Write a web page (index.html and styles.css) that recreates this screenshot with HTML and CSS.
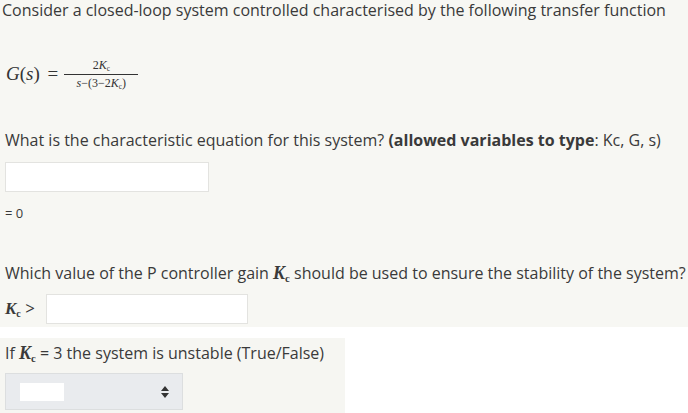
FILE: index.html
```html
<!DOCTYPE html>
<html>
<head>
<meta charset="utf-8">
<link rel="stylesheet" href="styles.css">
</head>
<body>
<div class="top">
  <p class="intro">Consider a closed-loop system controlled characterised by the following transfer function</p>
  <div class="formula">
    <span class="lhs"><i>G</i>(<i>s</i>) <span class="eqs">=</span></span>
    <span class="frac">
      <span class="num">2<i>K</i><sub>c</sub></span>
      <span class="den"><i>s</i>−(3−2<i>K</i><sub>c</sub>)</span>
    </span>
  </div>
  <p class="q1">What is the characteristic equation for this system? <b>(allowed variables to type</b>: Kc, G, s)</p>
  <div class="field wide"></div>
  <p class="eq0">= 0</p>
  <p class="q2">Which value of the P controller gain <span class="m"><i>K</i><sub>c</sub></span> should be used to ensure the stability of the system?</p>
  <div class="kc-row">
    <span class="m kc"><i>K</i><sub>c</sub> &gt;</span>
    <div class="field"></div>
  </div>
</div>
<div class="bottom">
  <p class="q3">If <span class="m"><i>K</i><sub>c</sub></span> = 3 the system is unstable (True/False)</p>
  <div class="select">
    <span class="sel-inner"></span>
    <svg class="arrows" width="8" height="12" viewBox="0 0 8 12"><path d="M4 0 L8 5 L0 5 Z M0 7 L8 7 L4 12 Z" fill="#333"/></svg>
  </div>
</div>
</body>
</html>
```
FILE: styles.css
```css
html, body {
  margin: 0;
  padding: 0;
  background: #ffffff;
}
body {
  font-family: "Open Sans", "DejaVu Sans", sans-serif;
  font-size: 16px;
  color: #3a3a3a;
  width: 688px;
  height: 413px;
  overflow: hidden;
}
p { margin: 0; line-height: 20px; height: 20px; white-space: nowrap; }
.top {
  background: #f7f7f3;
  height: 327px;
  overflow: hidden;
}
.intro { padding-left: 2px; }
.formula {
  margin-top: 34px;
  height: 40px;
  padding-left: 6px;
  display: flex;
  align-items: center;
  font-family: "Liberation Serif", "Times New Roman", serif;
  color: #333;
}
.lhs { font-size: 19px; margin-right: 6px; }
.lhs i { font-style: italic; }
.eqs { margin-left: 3px; }
.frac {
  display: inline-flex;
  flex-direction: column;
  align-items: center;
  font-size: 12px;
  line-height: 13px;
  width: 74px;
}
.num { border-bottom: 1px solid #333; width: 100%; text-align: center; padding-bottom: 2px; }
.den { padding-top: 2px; }
.frac sub, .m sub { font-size: 0.6em; vertical-align: -0.25em; line-height: 0; }
.m { font-family: "Liberation Serif", "Times New Roman", serif; font-size: 18px; font-weight: bold; line-height: 0; }
.m i { font-style: italic; }
.q1 { margin-top: 36px; padding-left: 5px; }
.q1 b { font-weight: 700; }
.field {
  background: #fff;
  border: 1px solid #e3e3e0;
  box-sizing: border-box;
  height: 30px;
  width: 202px;
}
.field.wide { margin: 12px 0 0 5px; width: 204px; }
.eq0 { margin-top: 11px; padding-left: 5px; font-size: 13px; }
.q2 { margin-top: 40px; padding-left: 5px; }
.kc-row {
  margin-top: 11px;
  padding-left: 5px;
  height: 30px;
  display: flex;
  align-items: center;
  gap: 4px;
}
.kc { font-size: 17px; width: 37px; line-height: 30px; }
.kc-row .field { height: 30px; width: 202px; }
.bottom {
  margin-top: 11px;
  width: 345px;
  height: 75px;
  background: #f6f6f2;
  padding-top: 5px;
}
.q3 { padding-left: 5px; }
.select {
  margin: 10px 0 0 5px;
  width: 178px;
  height: 37px;
  box-sizing: border-box;
  background: #e9ebee;
  border: 1px solid #dcdedf;
  display: flex;
  align-items: center;
  padding-left: 14px;
  padding-right: 13px;
}
.sel-inner { width: 44px; height: 18px; background: #fff; }
.arrows { margin-left: auto; }
```
